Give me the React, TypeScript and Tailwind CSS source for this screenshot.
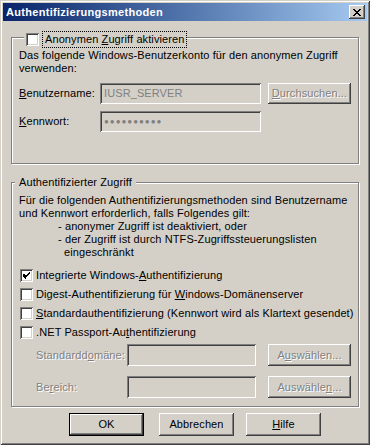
import type { ReactNode } from "react";

const raised =
  "shadow-[inset_-1px_-1px_0_#404040,inset_1px_1px_0_#ffffff,inset_-2px_-2px_0_#808080,inset_2px_2px_0_#d4d0c8]";
const sunken =
  "shadow-[inset_1px_1px_0_#808080,inset_-1px_-1px_0_#ffffff,inset_2px_2px_0_#404040,inset_-2px_-2px_0_#d4d0c8]";
const etched = "border border-[#808080] shadow-[inset_1px_1px_0_#ffffff,1px_1px_0_#ffffff]";
const disabledText = "text-[#808080] [text-shadow:1px_1px_0_#ffffff]";

function Button({
  children,
  width,
  height,
  disabled,
  isDefault,
}: {
  children: ReactNode;
  width: string;
  height: string;
  disabled?: boolean;
  isDefault?: boolean;
}) {
  const inner = (
    <div
      className={`flex h-full w-full items-center justify-center ${raised} ${
        disabled ? disabledText : "text-black"
      }`}
    >
      {children}
    </div>
  );
  if (isDefault) {
    return <div className={`${width} ${height} shrink-0 border border-black`}>{inner}</div>;
  }
  return <div className={`${width} ${height} shrink-0`}>{inner}</div>;
}

function Field({ width, height, children }: { width: string; height: string; children?: ReactNode }) {
  return (
    <div className={`${width} ${height} shrink-0 flex items-center px-[4px] bg-[#d4d0c8] ${sunken}`}>
      {children}
    </div>
  );
}

function CheckBox({ checked }: { checked?: boolean }) {
  return (
    <div className={`h-[13px] w-[13px] shrink-0 bg-white ${sunken} flex items-center justify-center`}>
      {checked && (
        <svg width="7" height="7" viewBox="0 0 7 7" shapeRendering="crispEdges">
          <path d="M0 2h1v1H0zM0 3h2v1H0zM0 4h3v1H0zM1 5h2v1H1zM2 6h1v1H2zM3 3h1v2H3zM4 2h1v2H4zM5 1h1v2H5zM6 0h1v2H6z" fill="#000" />
          <path d="M1 2h1v1H1zM2 3h1v1H2zM1 3h1v1H1zM3 4h1v1H3zM4 3h1v1H4zM5 2h1v1H5zM6 1h1v1H6z" fill="#000" />
        </svg>
      )}
    </div>
  );
}

function CheckRow({ checked, children, first }: { checked?: boolean; children: ReactNode; first?: boolean }) {
  return (
    <div className={`flex h-[13px] items-center ${first ? "mt-[10px]" : "mt-[6px]"}`}>
      <div className="ml-[1px]">
        <CheckBox checked={checked} />
      </div>
      <span className="ml-[3px] whitespace-nowrap">{children}</span>
    </div>
  );
}

export default function App() {
  return (
    <div
      className="h-[445px] w-[370px] overflow-hidden bg-[#d4d0c8] text-[11px] leading-[13px] tracking-[0.1px] text-black"
      style={{ fontFamily: "Tahoma, 'Liberation Sans', Arial, sans-serif" }}
    >
      <div className="flex h-full flex-col p-[3px] shadow-[inset_1px_1px_0_#d4d0c8,inset_-1px_-1px_0_#404040,inset_2px_2px_0_#ffffff,inset_-2px_-2px_0_#808080]">
        {/* Title bar */}
        <div className="flex h-[18px] shrink-0 items-center bg-gradient-to-r from-[#0a246a] to-[#a6caf0] pl-[3px] pr-[2px]">
          <span className="font-bold tracking-[0.3px] text-white">Authentifizierungsmethoden</span>
          <div className={`ml-auto flex h-[14px] w-[16px] items-center justify-center bg-[#d4d0c8] ${raised}`}>
            <svg width="8" height="7" viewBox="0 0 8 7" shapeRendering="crispEdges">
              <path d="M0 0h2v1H0zM6 0h2v1H6zM1 1h2v1H1zM5 1h2v1H5zM2 2h4v1H2zM3 3h2v1H3zM2 4h4v1H2zM1 5h2v1H1zM5 5h2v1H5zM0 6h2v1H0zM6 6h2v1H6z" fill="#000" />
            </svg>
          </div>
        </div>

        {/* Anonymous access group */}
        <div className={`relative ml-[8px] mt-[16px] h-[127px] w-[348px] ${etched} pl-[7px] pt-[11px] whitespace-nowrap`}>
          <div className="absolute left-[12px] top-[-7px] flex items-center bg-[#d4d0c8] pl-[2px]">
            <CheckBox />
            <span className="ml-[3px] border border-dotted border-black px-[2px] py-[1px]">
              Anonymen <u>Z</u>ugriff aktivieren
            </span>
          </div>
          <p>Das folgende Windows-Benutzerkonto für den anonymen Zugriff</p>
          <p>verwenden:</p>
          <div className="mt-[8px] flex items-center">
            <span className="w-[81px] shrink-0">
              <u>B</u>enutzername:
            </span>
            <Field width="w-[161px]" height="h-[21px]">
              <span className="text-[#808080]">IUSR_SERVER</span>
            </Field>
            <div className="ml-[7px]">
              <Button width="w-[83px]" height="h-[21px]" disabled>
                <span>
                  <u>D</u>urchsuchen...
                </span>
              </Button>
            </div>
          </div>
          <div className="mt-[7px] flex items-center">
            <span className="w-[81px] shrink-0">
              <u>K</u>ennwort:
            </span>
            <Field width="w-[161px]" height="h-[21px]">
              <span className="text-[8px] tracking-[1px] text-[#808080]">●●●●●●●●●●</span>
            </Field>
          </div>
        </div>

        {/* Authenticated access group */}
        <div className={`relative ml-[8px] mt-[18px] h-[225px] w-[348px] ${etched} pl-[7px] pt-[11px] whitespace-nowrap`}>
          <div className="absolute left-[3px] top-[-7px] bg-[#d4d0c8] px-[4px]">Authentifizierter Zugriff</div>
          <p>Für die folgenden Authentifizierungsmethoden sind Benutzername</p>
          <p>und Kennwort erforderlich, falls Folgendes gilt:</p>
          <p className="pl-[39px]">- anonymer Zugriff ist deaktiviert, oder</p>
          <p className="pl-[39px]">- der Zugriff ist durch NTFS-Zugriffssteuerungslisten</p>
          <p className="pl-[45px]">eingeschränkt</p>

          <CheckRow checked first>
            Integrierte Windows-<u>A</u>uthentifizierung
          </CheckRow>
          <CheckRow>
            Digest-Authentifizierung für <u>W</u>indows-Domänenserver
          </CheckRow>
          <CheckRow>
            <u>S</u>tandardauthentifizierung (Kennwort wird als Klartext gesendet)
          </CheckRow>
          <CheckRow>
            .NET Passport-Au<u>t</u>hentifizierung
          </CheckRow>

          <div className="mt-[5px] flex items-center">
            <span className={`ml-[17px] w-[91px] shrink-0 ${disabledText}`}>
              Standardd<u>o</u>mäne:
            </span>
            <Field width="w-[129px]" height="h-[22px]" />
            <div className="ml-[12px]">
              <Button width="w-[83px]" height="h-[22px]" disabled>
                <span>
                  A<u>u</u>swählen...
                </span>
              </Button>
            </div>
          </div>
          <div className="mt-[10px] flex items-center">
            <span className={`ml-[17px] w-[91px] shrink-0 ${disabledText}`}>
              Be<u>r</u>eich:
            </span>
            <Field width="w-[129px]" height="h-[22px]" />
            <div className="ml-[12px]">
              <Button width="w-[83px]" height="h-[22px]" disabled>
                <span>
                  Auswähle<u>n</u>...
                </span>
              </Button>
            </div>
          </div>
        </div>

        {/* Dialog buttons */}
        <div className="mt-[6px] flex">
          <div className="ml-[66px]">
            <Button width="w-[75px]" height="h-[23px]" isDefault>
              OK
            </Button>
          </div>
          <div className="ml-[15px]">
            <Button width="w-[75px]" height="h-[23px]">
              Abbrechen
            </Button>
          </div>
          <div className="ml-[12px]">
            <Button width="w-[75px]" height="h-[23px]">
              <span>
                <u>H</u>ilfe
              </span>
            </Button>
          </div>
        </div>
      </div>
    </div>
  );
}
